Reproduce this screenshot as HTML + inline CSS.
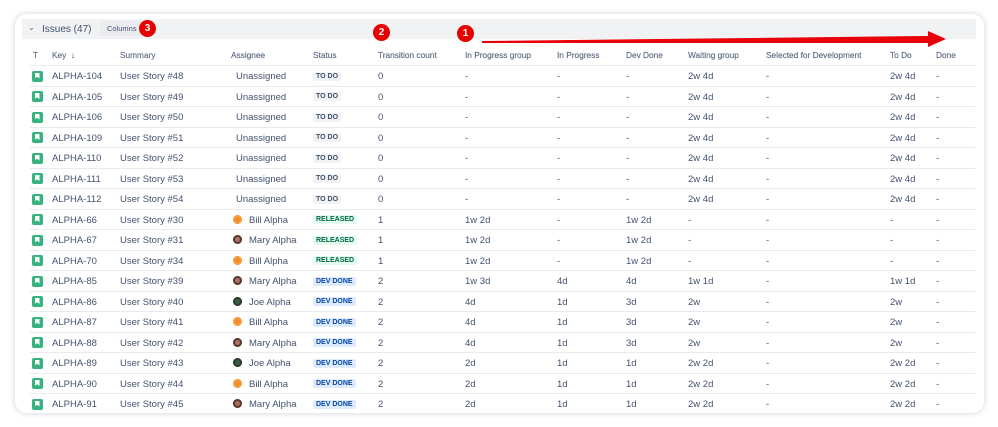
<!DOCTYPE html>
<html><head><meta charset="utf-8"><style>
*{margin:0;padding:0;box-sizing:border-box}
body{width:998px;height:427px;background:#fff;font-family:"Liberation Sans",sans-serif;position:relative;overflow:hidden;color:#172b4d}
.card{position:absolute;left:15px;top:14px;width:969px;height:399px;border-radius:12px;background:#fff;box-shadow:0 0 7px rgba(0,0,0,.18)}
.hbar{position:absolute;left:22px;top:19px;width:954px;height:20px;background:#f1f2f4}
.t{position:absolute;white-space:nowrap}
.hd{font-size:8.3px;color:#5e6c84;top:50px;font-weight:500;-webkit-text-stroke:0.15px #5e6c84}
.row{position:absolute;left:30px;width:945px;height:20.5px;border-top:1px solid #e8eaed;font-size:9.5px;color:#42526e}
.row span{position:absolute;top:5px;white-space:nowrap}
.ic{width:11px;height:11px;background:#36b37e;border-radius:2px;top:4.5px!important;left:1.5px!important}
.ic:after{content:"";position:absolute;left:3px;top:2px;width:5px;height:6px;background:#fff;clip-path:polygon(0 0,100% 0,100% 100%,50% 70%,0 100%)}
.lz{font-size:7px!important;font-weight:bold;padding:1px 3px;border-radius:2px;top:5.5px!important}
.todo{background:#f1f2f4;color:#42526e}
.rel{background:#e3fcef;color:#006644}
.dev{background:#deebff;color:#0747a6}
.av{width:9px;height:9px;border-radius:50%;top:5px!important}
.b{background:#f58a2a;box-shadow:inset 0 0 0 2px #f5a040}
.m{background:#b07060;box-shadow:inset 0 0 0 2px #5a3a30}
.j{background:#405a48;box-shadow:inset 0 0 0 2px #2b3b30}
.num{position:absolute;width:17px;height:17px;border-radius:50%;background:#e60000;color:#fff;font-size:10px;font-weight:bold;text-align:center;line-height:17px}
</style></head><body>
<div class="card"></div>
<div class="hbar"></div>
<div class="t" style="left:28px;top:23px;font-size:8px;color:#5e6c84">⌄</div>
<div class="t" style="left:42px;top:24px;font-size:10px;color:#42526e">Issues (47)</div>
<div class="t" style="left:100px;top:21px;width:42px;height:15px;background:#ebecf0;border-radius:3px;font-size:7.5px;line-height:15px;padding-left:7px;color:#42526e">Columns</div>
<div class="num" style="left:139px;top:20px">3</div>
<div class="num" style="left:373px;top:24px">2</div>
<div class="num" style="left:457px;top:25px">1</div>
<svg style="position:absolute;left:470px;top:28px" width="480" height="24"><polygon points="12,13 458,8 458,3 476,11 458,19 458,15 12,15" fill="#e8000b"/></svg>
<div class="t hd" style="left:33px">T</div>
<div class="t hd" style="left:52px">Key &nbsp;↓</div>
<div class="t hd" style="left:120px">Summary</div>
<div class="t hd" style="left:231px">Assignee</div>
<div class="t hd" style="left:313px">Status</div>
<div class="t hd" style="left:378px">Transition count</div>
<div class="t hd" style="left:465px">In Progress group</div>
<div class="t hd" style="left:557px">In Progress</div>
<div class="t hd" style="left:626px">Dev Done</div>
<div class="t hd" style="left:688px">Waiting group</div>
<div class="t hd" style="left:766px">Selected for Development</div>
<div class="t hd" style="left:890px">To Do</div>
<div class="t hd" style="left:936px">Done</div>

<div class="row" style="top:65px"><span class="ic"></span><span style="left:22px">ALPHA-104</span><span style="left:90px">User Story #48</span><span style="left:206px">Unassigned</span><span class="lz todo" style="left:283px">TO DO</span><span style="left:348px">0</span><span style="left:435px">-</span><span style="left:527px">-</span><span style="left:596px">-</span><span style="left:658px">2w 4d</span><span style="left:736px">-</span><span style="left:860px">2w 4d</span><span style="left:906px">-</span></div>
<div class="row" style="top:85.5px"><span class="ic"></span><span style="left:22px">ALPHA-105</span><span style="left:90px">User Story #49</span><span style="left:206px">Unassigned</span><span class="lz todo" style="left:283px">TO DO</span><span style="left:348px">0</span><span style="left:435px">-</span><span style="left:527px">-</span><span style="left:596px">-</span><span style="left:658px">2w 4d</span><span style="left:736px">-</span><span style="left:860px">2w 4d</span><span style="left:906px">-</span></div>
<div class="row" style="top:106px"><span class="ic"></span><span style="left:22px">ALPHA-106</span><span style="left:90px">User Story #50</span><span style="left:206px">Unassigned</span><span class="lz todo" style="left:283px">TO DO</span><span style="left:348px">0</span><span style="left:435px">-</span><span style="left:527px">-</span><span style="left:596px">-</span><span style="left:658px">2w 4d</span><span style="left:736px">-</span><span style="left:860px">2w 4d</span><span style="left:906px">-</span></div>
<div class="row" style="top:126.5px"><span class="ic"></span><span style="left:22px">ALPHA-109</span><span style="left:90px">User Story #51</span><span style="left:206px">Unassigned</span><span class="lz todo" style="left:283px">TO DO</span><span style="left:348px">0</span><span style="left:435px">-</span><span style="left:527px">-</span><span style="left:596px">-</span><span style="left:658px">2w 4d</span><span style="left:736px">-</span><span style="left:860px">2w 4d</span><span style="left:906px">-</span></div>
<div class="row" style="top:147px"><span class="ic"></span><span style="left:22px">ALPHA-110</span><span style="left:90px">User Story #52</span><span style="left:206px">Unassigned</span><span class="lz todo" style="left:283px">TO DO</span><span style="left:348px">0</span><span style="left:435px">-</span><span style="left:527px">-</span><span style="left:596px">-</span><span style="left:658px">2w 4d</span><span style="left:736px">-</span><span style="left:860px">2w 4d</span><span style="left:906px">-</span></div>
<div class="row" style="top:167.5px"><span class="ic"></span><span style="left:22px">ALPHA-111</span><span style="left:90px">User Story #53</span><span style="left:206px">Unassigned</span><span class="lz todo" style="left:283px">TO DO</span><span style="left:348px">0</span><span style="left:435px">-</span><span style="left:527px">-</span><span style="left:596px">-</span><span style="left:658px">2w 4d</span><span style="left:736px">-</span><span style="left:860px">2w 4d</span><span style="left:906px">-</span></div>
<div class="row" style="top:188px"><span class="ic"></span><span style="left:22px">ALPHA-112</span><span style="left:90px">User Story #54</span><span style="left:206px">Unassigned</span><span class="lz todo" style="left:283px">TO DO</span><span style="left:348px">0</span><span style="left:435px">-</span><span style="left:527px">-</span><span style="left:596px">-</span><span style="left:658px">2w 4d</span><span style="left:736px">-</span><span style="left:860px">2w 4d</span><span style="left:906px">-</span></div>
<div class="row" style="top:208.5px"><span class="ic"></span><span style="left:22px">ALPHA-66</span><span style="left:90px">User Story #30</span><span class="av b" style="left:203px"></span><span style="left:219px">Bill Alpha</span><span class="lz rel" style="left:283px">RELEASED</span><span style="left:348px">1</span><span style="left:435px">1w 2d</span><span style="left:527px">-</span><span style="left:596px">1w 2d</span><span style="left:658px">-</span><span style="left:736px">-</span><span style="left:860px">-</span><span style="left:906px">-</span></div>
<div class="row" style="top:229px"><span class="ic"></span><span style="left:22px">ALPHA-67</span><span style="left:90px">User Story #31</span><span class="av m" style="left:203px"></span><span style="left:219px">Mary Alpha</span><span class="lz rel" style="left:283px">RELEASED</span><span style="left:348px">1</span><span style="left:435px">1w 2d</span><span style="left:527px">-</span><span style="left:596px">1w 2d</span><span style="left:658px">-</span><span style="left:736px">-</span><span style="left:860px">-</span><span style="left:906px">-</span></div>
<div class="row" style="top:249.5px"><span class="ic"></span><span style="left:22px">ALPHA-70</span><span style="left:90px">User Story #34</span><span class="av b" style="left:203px"></span><span style="left:219px">Bill Alpha</span><span class="lz rel" style="left:283px">RELEASED</span><span style="left:348px">1</span><span style="left:435px">1w 2d</span><span style="left:527px">-</span><span style="left:596px">1w 2d</span><span style="left:658px">-</span><span style="left:736px">-</span><span style="left:860px">-</span><span style="left:906px">-</span></div>
<div class="row" style="top:270px"><span class="ic"></span><span style="left:22px">ALPHA-85</span><span style="left:90px">User Story #39</span><span class="av m" style="left:203px"></span><span style="left:219px">Mary Alpha</span><span class="lz dev" style="left:283px">DEV DONE</span><span style="left:348px">2</span><span style="left:435px">1w 3d</span><span style="left:527px">4d</span><span style="left:596px">4d</span><span style="left:658px">1w 1d</span><span style="left:736px">-</span><span style="left:860px">1w 1d</span><span style="left:906px">-</span></div>
<div class="row" style="top:290.5px"><span class="ic"></span><span style="left:22px">ALPHA-86</span><span style="left:90px">User Story #40</span><span class="av j" style="left:203px"></span><span style="left:219px">Joe Alpha</span><span class="lz dev" style="left:283px">DEV DONE</span><span style="left:348px">2</span><span style="left:435px">4d</span><span style="left:527px">1d</span><span style="left:596px">3d</span><span style="left:658px">2w</span><span style="left:736px">-</span><span style="left:860px">2w</span><span style="left:906px">-</span></div>
<div class="row" style="top:311px"><span class="ic"></span><span style="left:22px">ALPHA-87</span><span style="left:90px">User Story #41</span><span class="av b" style="left:203px"></span><span style="left:219px">Bill Alpha</span><span class="lz dev" style="left:283px">DEV DONE</span><span style="left:348px">2</span><span style="left:435px">4d</span><span style="left:527px">1d</span><span style="left:596px">3d</span><span style="left:658px">2w</span><span style="left:736px">-</span><span style="left:860px">2w</span><span style="left:906px">-</span></div>
<div class="row" style="top:331.5px"><span class="ic"></span><span style="left:22px">ALPHA-88</span><span style="left:90px">User Story #42</span><span class="av m" style="left:203px"></span><span style="left:219px">Mary Alpha</span><span class="lz dev" style="left:283px">DEV DONE</span><span style="left:348px">2</span><span style="left:435px">4d</span><span style="left:527px">1d</span><span style="left:596px">3d</span><span style="left:658px">2w</span><span style="left:736px">-</span><span style="left:860px">2w</span><span style="left:906px">-</span></div>
<div class="row" style="top:352px"><span class="ic"></span><span style="left:22px">ALPHA-89</span><span style="left:90px">User Story #43</span><span class="av j" style="left:203px"></span><span style="left:219px">Joe Alpha</span><span class="lz dev" style="left:283px">DEV DONE</span><span style="left:348px">2</span><span style="left:435px">2d</span><span style="left:527px">1d</span><span style="left:596px">1d</span><span style="left:658px">2w 2d</span><span style="left:736px">-</span><span style="left:860px">2w 2d</span><span style="left:906px">-</span></div>
<div class="row" style="top:372.5px"><span class="ic"></span><span style="left:22px">ALPHA-90</span><span style="left:90px">User Story #44</span><span class="av b" style="left:203px"></span><span style="left:219px">Bill Alpha</span><span class="lz dev" style="left:283px">DEV DONE</span><span style="left:348px">2</span><span style="left:435px">2d</span><span style="left:527px">1d</span><span style="left:596px">1d</span><span style="left:658px">2w 2d</span><span style="left:736px">-</span><span style="left:860px">2w 2d</span><span style="left:906px">-</span></div>
<div class="row" style="top:393px"><span class="ic"></span><span style="left:22px">ALPHA-91</span><span style="left:90px">User Story #45</span><span class="av m" style="left:203px"></span><span style="left:219px">Mary Alpha</span><span class="lz dev" style="left:283px">DEV DONE</span><span style="left:348px">2</span><span style="left:435px">2d</span><span style="left:527px">1d</span><span style="left:596px">1d</span><span style="left:658px">2w 2d</span><span style="left:736px">-</span><span style="left:860px">2w 2d</span><span style="left:906px">-</span></div>
</body></html>
